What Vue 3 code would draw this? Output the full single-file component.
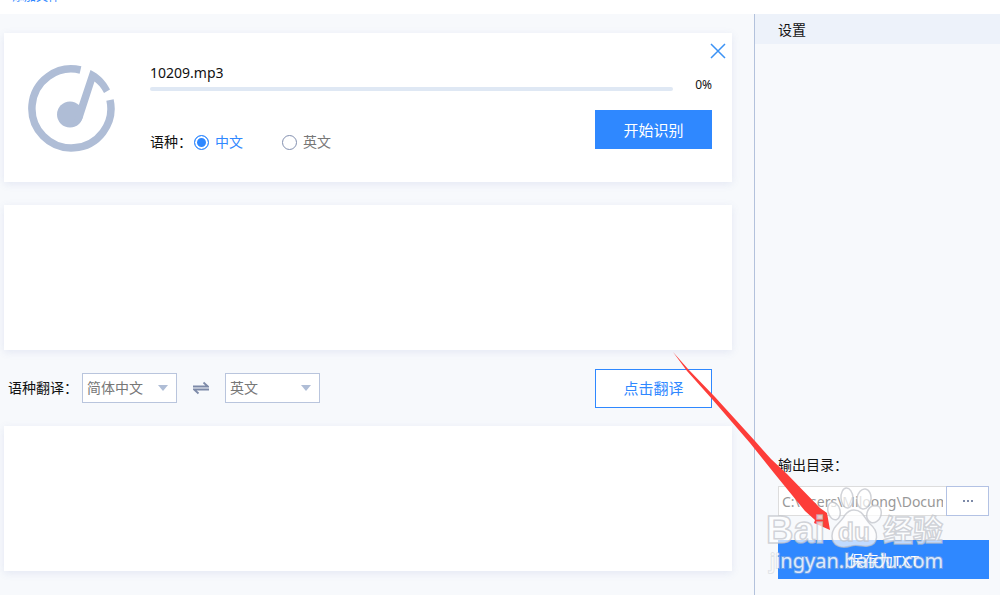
<template>
  <div class="app">
    <header class="topbar">
      <a href="#" class="add-file" @click.prevent>添加文件</a>
    </header>

    <div class="body">
      <main class="content">
        <section class="card file-card">
          <svg class="file-icon" viewBox="0 0 88 88" aria-hidden="true">
            <path d="M52.500 5A39.500 39.500 0 1 0 82 35" fill="none" stroke="#afbdd6" stroke-width="7.500" />
            <circle cx="42" cy="49.500" r="13" fill="#afbdd6" />
            <path
              d="M51 39.500 62.500 5C71 9 78 16 82 24.500L76 28C73.500 23 70 19 66.500 16.500L55 52C53 58 49 61 44 62Z"
              fill="#afbdd6"
            />
          </svg>
          <div class="file-info">
            <div class="file-name">{{ file.name }}</div>
            <div class="progress">
              <div class="progress-bar" :style="{ width: file.progress + '%' }"></div>
            </div>
            <div class="lang-row">
              <span class="label">语种：</span>
              <label v-for="item in languages" :key="item" class="radio">
                <input v-model="language" type="radio" name="language" :value="item" />
                <span>{{ item }}</span>
              </label>
            </div>
          </div>
          <div class="file-side">
            <button class="close" type="button" aria-label="关闭">
              <svg viewBox="0 0 16 16" aria-hidden="true">
                <path d="M1 1 15 15M15 1 1 15" fill="none" stroke="#3b92f5" stroke-width="1.500" />
              </svg>
            </button>
            <span class="percent">{{ file.progress }}%</span>
            <button class="btn btn-primary" type="button">开始识别</button>
          </div>
        </section>

        <textarea v-model="sourceText" class="card pane" aria-label="识别结果"></textarea>

        <div class="translate-row">
          <label for="from">语种翻译：</label>
          <span class="select">
            <select id="from" v-model="from">
              <option>简体中文</option>
              <option>英文</option>
            </select>
          </span>
          <button class="swap" type="button" aria-label="互换" @click="swap">
            <svg viewBox="0 0 16 14" aria-hidden="true">
              <path d="M0 5.500H15L10.500 1.500M16 8.500H1L5.500 12.500" fill="none" stroke="#7d8aa8" stroke-width="1.800" />
            </svg>
          </button>
          <span class="select">
            <select v-model="to" aria-label="目标语种">
              <option>简体中文</option>
              <option>英文</option>
            </select>
          </span>
          <button class="btn btn-outline" type="button">点击翻译</button>
        </div>

        <textarea v-model="resultText" class="card pane" aria-label="翻译结果"></textarea>
      </main>

      <aside class="settings">
        <h2>设置</h2>
        <div class="output">
          <label for="dir">输出目录：</label>
          <div class="dir-row">
            <input id="dir" v-model="outputDir" type="text" />
            <button class="browse" type="button" aria-label="浏览">
              <svg viewBox="0 0 12 4" aria-hidden="true">
                <path d="M1 1h2v2h-2zM5 1h2v2h-2zM9 1h2v2h-2z" fill="#7d8aa8" />
              </svg>
            </button>
          </div>
          <button class="btn btn-primary save" type="button">保存为TXT</button>
        </div>
      </aside>
    </div>

    <svg class="overlay" viewBox="0 0 340 250" aria-hidden="true">
      <path
        d="M3 2 18 19 45 47 85 91 101 109 117 124 150 158 157 163 160 180 144 173 145 170 135 161 104 123 80 93 42 49 17 21Z"
        fill="#fd3d39"
      />
      <g class="watermark">
        <g class="paw">
          <ellipse cx="164" cy="161" rx="6" ry="9" transform="rotate(-15 164 161)" />
          <ellipse cx="177" cy="148" rx="6" ry="10" transform="rotate(-4 177 148)" />
          <ellipse cx="194" cy="149" rx="7" ry="10" transform="rotate(8 194 149)" />
          <ellipse cx="204" cy="164" rx="7" ry="9" transform="rotate(20 204 164)" />
          <path d="M184 160C193 160 194 168 200 174C209 181 209 195 198 196C192 197 187 194 181 196C171 199 162 196 162 186C162 176 171 173 175 165C178 161 180 160 184 160Z" />
        </g>
        <text x="96" y="193" class="logo">Bai</text>
        <text x="168" y="191" class="du">du</text>
        <text x="213" y="191" class="logo-cn">经验</text>
        <text x="100" y="218" class="site">jingyan.baidu.com</text>
      </g>
    </svg>
  </div>
</template>

<script setup>
import { ref } from 'vue'

const file = ref({ name: '10209.mp3', progress: 0 })
const languages = ['中文', '英文']
const language = ref('中文')
const from = ref('简体中文')
const to = ref('英文')
const sourceText = ref('')
const resultText = ref('')
const outputDir = ref('C:\\Users\\Miloong\\Documents')

const swap = () => {
  const current = from.value
  from.value = to.value
  to.value = current
}
</script>

<style>
body {
  margin: 0;
}
</style>

<style scoped>
* {
  box-sizing: border-box;
}

.app {
  position: relative;
  display: flex;
  flex-direction: column;
  min-height: 100vh;
  overflow: hidden;
  background: #f7f9fc;
  color: #111;
  font-family: "Noto Sans", "Noto Sans CJK SC", sans-serif;
  font-size: 14px;
  line-height: 20px;
}

button,
input,
select,
textarea {
  font: inherit;
}

button {
  padding: 0;
  cursor: pointer;
}

.topbar {
  height: 14px;
  padding-left: 12px;
  overflow: hidden;
  background: #fff;
}

.add-file {
  display: block;
  margin-top: -13px;
  color: #2f88ff;
  font-size: 12px;
  line-height: 20px;
  text-decoration: none;
}

.body {
  display: flex;
  flex: 1;
}

.content {
  display: flex;
  flex: 1;
  flex-direction: column;
  min-width: 0;
  padding: 19px 22px 24px 4px;
}

.card {
  background: #fff;
  box-shadow: 0 2px 8px rgba(90, 110, 180, 0.12);
}

.file-card {
  display: flex;
  height: 149px;
  margin-bottom: 23px;
  padding: 0 20px 0 24px;
}

.file-icon {
  width: 88px;
  height: 88px;
  margin-top: 32px;
}

.file-info {
  flex: 1;
  margin-left: 34px;
  padding-top: 30px;
}

.progress {
  height: 4px;
  margin-top: 4px;
  border-radius: 2px;
  background: #dfe8f4;
}

.progress-bar {
  height: 100%;
  border-radius: 2px;
  background: #2f88ff;
}

.lang-row {
  display: flex;
  align-items: center;
  margin-top: 41px;
}

.lang-row .label {
  width: 44px;
}

.radio {
  display: flex;
  align-items: center;
  gap: 6px;
  margin-right: 39px;
  color: #777;
}

.radio:has(input:checked) {
  color: #2f88ff;
}

.radio input {
  width: 15px;
  height: 15px;
  margin: 0;
  border: 1px solid #8390b0;
  border-radius: 50%;
  background: #fff;
  appearance: none;
}

.radio input:checked {
  border-color: #2f88ff;
  background: #2f88ff;
  box-shadow: inset 0 0 0 2px #fff;
}

.file-side {
  display: flex;
  flex-direction: column;
  align-items: flex-end;
  width: 117px;
  margin-left: -78px;
}

.close {
  width: 16px;
  height: 16px;
  margin: 10px -14px 0 0;
  border: 0;
  background: none;
}

.close svg,
.swap svg,
.browse svg {
  display: block;
  margin: 0 auto;
}

.percent {
  margin: 16px 0 15px;
  font-size: 12px;
}

.btn {
  height: 39px;
  border: 1px solid #2f88ff;
  font-size: 15px;
}

.btn-primary {
  width: 117px;
  background: #2f88ff;
  color: #fff;
}

.btn-outline {
  width: 117px;
  margin-left: auto;
  background: #fff;
  color: #2f88ff;
}

.pane {
  display: block;
  flex: 1;
  width: 100%;
  min-height: 120px;
  padding: 12px;
  border: 0;
  outline: 0;
  resize: none;
}

.translate-row {
  display: flex;
  align-items: center;
  height: 76px;
  padding: 0 20px 0 4px;
}

.translate-row label {
  width: 74px;
  white-space: nowrap;
}

.select {
  position: relative;
}

.select::after {
  position: absolute;
  top: 12px;
  right: 9px;
  border: solid transparent;
  border-width: 6px 5px 0;
  border-top-color: #afbdd6;
  content: "";
  pointer-events: none;
}

.select select {
  display: block;
  width: 95px;
  height: 30px;
  padding: 0 4px;
  border: 1px solid #b9c5dd;
  border-radius: 0;
  background: #fff;
  color: #777;
  appearance: none;
}

.swap {
  width: 16px;
  margin: 0 16px;
  border: 0;
  background: none;
}

.swap svg {
  width: 16px;
  height: 14px;
}

.settings {
  display: flex;
  flex-direction: column;
  width: 246px;
  border-left: 1px solid #b3c2dc;
}

.settings h2 {
  height: 30px;
  margin: 0;
  padding-left: 23px;
  background: #edf2fa;
  font-size: 14px;
  font-weight: 400;
  line-height: 32px;
}

.output {
  display: flex;
  flex-direction: column;
  margin-top: auto;
  padding: 0 11px 16px 23px;
}

.dir-row {
  display: flex;
  margin: 11px 0 24px;
}

.dir-row input {
  flex: 1;
  min-width: 0;
  height: 30px;
  padding: 0 3px;
  border: 1px solid #ddd;
  border-right: 0;
  background: #fff;
  color: #999;
}

.browse {
  width: 43px;
  height: 30px;
  border: 1px solid #b3c2e4;
  background: #fff;
}

.browse svg {
  width: 12px;
  height: 4px;
}

.save {
  width: 100%;
}

.overlay {
  position: absolute;
  right: -10px;
  bottom: -5px;
  width: 340px;
  height: 250px;
  pointer-events: none;
}

.watermark {
  fill: rgba(255, 255, 255, 0.7);
  stroke: rgba(190, 193, 200, 0.7);
  stroke-width: 1.5px;
}

.watermark text {
  font-family: "Liberation Sans", "Noto Sans CJK SC", sans-serif;
  font-weight: 700;
}

.watermark .logo {
  font-size: 38px;
}

.watermark .du {
  font-size: 26px;
}

.watermark .logo-cn {
  font-size: 30px;
}

.watermark .site {
  font-family: "Noto Sans", sans-serif;
  font-size: 20px;
  font-weight: 400;
  fill: rgba(255, 255, 255, 0.8);
  stroke: rgba(190, 193, 200, 0.4);
  stroke-width: 2px;
  paint-order: stroke;
}
</style>
